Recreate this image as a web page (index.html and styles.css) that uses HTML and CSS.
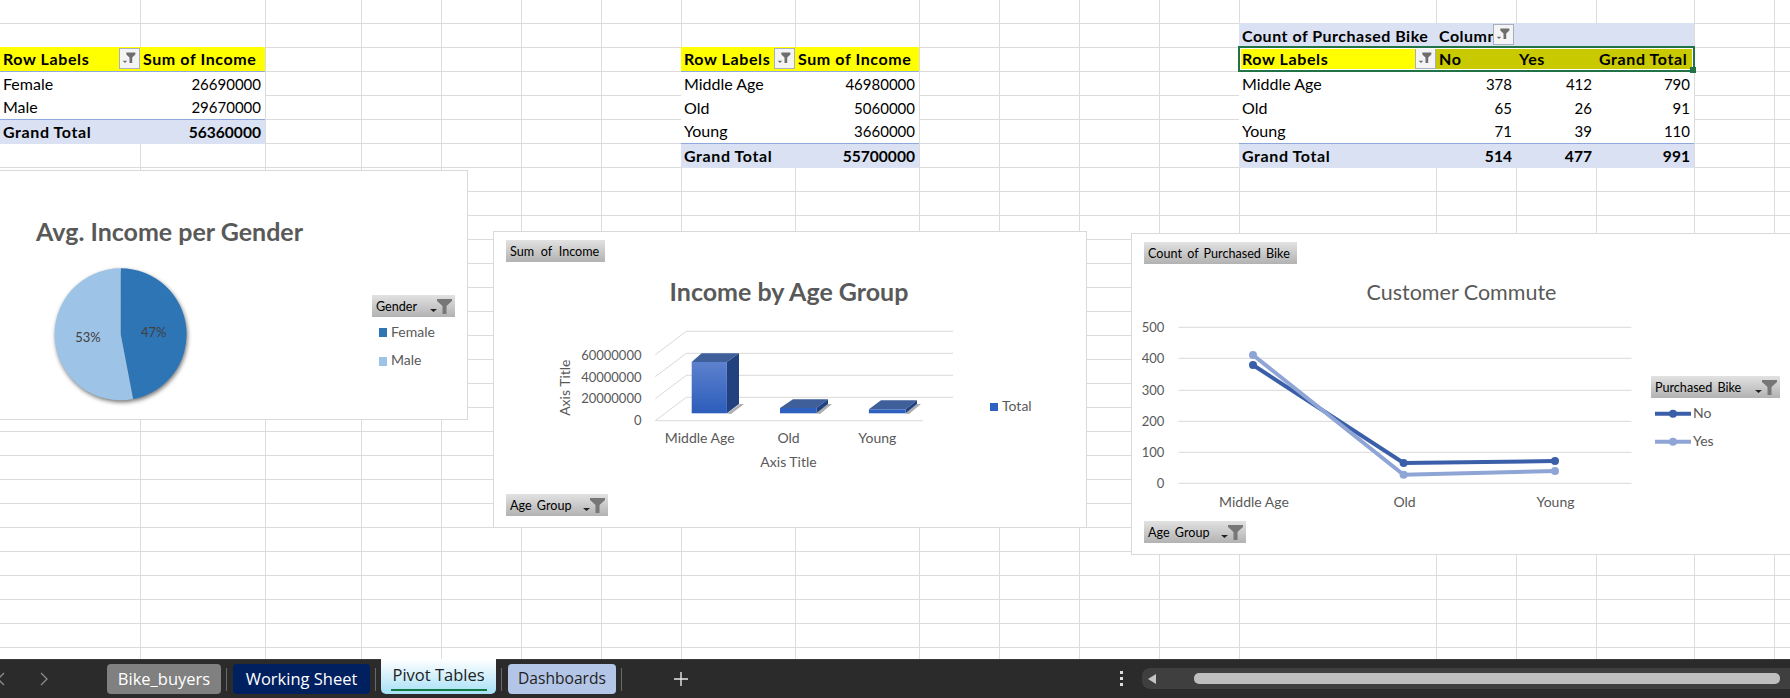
FILE: index.html
```html
<!DOCTYPE html>
<html>
<head>
	<meta charset="utf-8">
	<title>Pivot Tables</title>
	<link rel="stylesheet" href="styles.css">
</head>

<body>

	<svg class="defs" width="0" height="0">
		<symbol id="filter" viewBox="0 0 21 21">
			<path d="M7 4h10v2l-3.5 3.5v6h-3v-6L7 6z" fill="#6e6e6e"/>
			<path d="M3 13h5l-2.5 2.5z" fill="#6e6e6e"/>
		</symbol>
		<symbol id="funnel" viewBox="0 0 22 15">
			<path d="M7 0h15v2l-5.5 5v8h-4V7L7 2z" fill="#777"/>
			<path d="M0 10h7l-3.5 3z" fill="#222"/>
		</symbol>
		<linearGradient id="barFront" x1="0" y1="0" x2="0" y2="1">
			<stop offset="0" stop-color="#5c81cd"/>
			<stop offset="1" stop-color="#2c5dbb"/>
		</linearGradient>
	</svg>

	<div class="window">
		<main class="sheet">

			<table class="pivot pivot-gender">
				<colgroup><col class="w140"><col></colgroup>
				<tr class="head">
					<td class="has-filter">Row Labels <span class="filter-btn"><svg><use href="#filter"/></svg></span></td>
					<td>Sum of Income</td>
				</tr>
				<tr><td>Female</td><td class="num">26690000</td></tr>
				<tr><td>Male</td><td class="num">29670000</td></tr>
				<tr class="total"><td>Grand Total</td><td class="num">56360000</td></tr>
			</table>

			<table class="pivot pivot-age">
				<colgroup><col class="w114"><col></colgroup>
				<tr class="head">
					<td class="has-filter">Row Labels <span class="filter-btn"><svg><use href="#filter"/></svg></span></td>
					<td>Sum of Income</td>
				</tr>
				<tr><td>Middle Age</td><td class="num">46980000</td></tr>
				<tr><td>Old</td><td class="num">5060000</td></tr>
				<tr><td>Young</td><td class="num">3660000</td></tr>
				<tr class="total"><td>Grand Total</td><td class="num">55700000</td></tr>
			</table>

			<table class="pivot pivot-bike">
				<colgroup><col class="w197"><col class="w80"><col class="w80"><col></colgroup>
				<tr class="total caption">
					<td>Count of Purchased Bike</td>
					<td class="has-filter" colspan="3">Column<span class="filter-btn"><svg><use href="#filter"/></svg></span></td>
				</tr>
				<tr class="head selected">
					<td class="has-filter">Row Labels <span class="filter-btn"><svg><use href="#filter"/></svg></span></td>
					<td>No</td>
					<td>Yes</td>
					<td>Grand Total</td>
				</tr>
				<tr><td>Middle Age</td><td class="num">378</td><td class="num">412</td><td class="num">790</td></tr>
				<tr><td>Old</td><td class="num">65</td><td class="num">26</td><td class="num">91</td></tr>
				<tr><td>Young</td><td class="num">71</td><td class="num">39</td><td class="num">110</td></tr>
				<tr class="total"><td>Grand Total</td><td class="num">514</td><td class="num">477</td><td class="num">991</td></tr>
			</table>
			<div class="selection"><span class="handle"></span></div>

			<section class="chart chart-gender">
				<svg class="plot" viewBox="0 171 467 248">
					<text class="title bold" x="36" y="241">Avg. Income per Gender</text>
					<g class="pie">
						<path d="M120.7 334.3V268.3A66 66 0 0 1 133.1 399.1Z" fill="#2e75b6"/>
						<path d="M120.7 334.3L133.1 399.1A66 66 0 1 1 120.7 268.3Z" fill="#9dc3e6"/>
					</g>
					<text class="value dark mid" x="153.7" y="337">47%</text>
					<text class="value dark mid" x="88" y="342">53%</text>
					<rect x="379" y="328" width="8" height="9" fill="#2e75b6"/>
					<text class="label" x="391" y="337">Female</text>
					<rect x="379" y="357" width="8" height="9" fill="#9dc3e6"/>
					<text class="label" x="391" y="365">Male</text>
				</svg>
				<div class="chip chip-gender">Gender <svg class="funnel"><use href="#funnel"/></svg></div>
			</section>

			<section class="chart chart-income">
				<svg class="plot" viewBox="494 233 592 295">
					<text class="title bold mid" x="789" y="302">Income by Age Group</text>
					<g class="gridlines">
						<path d="M655.3 421.7L686.3 398.3H953"/>
						<path d="M655.3 399.7L686.3 376.3H953"/>
						<path d="M655.3 377.7L686.3 354.3H953"/>
						<path d="M655.3 355.7L686.3 332.3H953"/>
						<path d="M655.3 421.7H922.8"/>
					</g>
					<text class="value end" x="641.5" y="361">60000000</text>
					<text class="value end" x="641.5" y="383">40000000</text>
					<text class="value end" x="641.5" y="404">20000000</text>
					<text class="value end" x="641.5" y="426">0</text>
					<text class="label mid" transform="translate(570 388.7) rotate(-90)">Axis Title</text>

					<path class="bar-shadow" d="M727 414.5L740 405L744 405L731 415Z"/>
					<path d="M691.7 363L701.6 354.3H739L726.9 363Z" fill="#3f5f9a"/>
					<path d="M726.9 363L739 354.3V405L726.9 414.3Z" fill="#22417f"/>
					<rect x="691.7" y="363" width="35.2" height="51.3" fill="url(#barFront)"/>

					<path class="bar-shadow" d="M816 414.5L828 405L832 405L820 415Z"/>
					<path d="M780 409L793 400.3H828L816.4 409Z" fill="#3f5f9a"/>
					<path d="M816.4 409L828 400.3V405L816.4 414.3Z" fill="#22417f"/>
					<rect x="780" y="409" width="36.4" height="5.3" fill="#2f62c0"/>

					<path class="bar-shadow" d="M905 414.5L917 405L921 405L909 415Z"/>
					<path d="M868.9 410.3L881 401.3H917L905.6 410.3Z" fill="#3f5f9a"/>
					<path d="M905.6 410.3L917 401.3V405L905.6 414.3Z" fill="#22417f"/>
					<rect x="868.9" y="410.3" width="36.7" height="4" fill="#2f62c0"/>

					<text class="label mid" x="699.7" y="444">Middle Age</text>
					<text class="label mid" x="788.5" y="444">Old</text>
					<text class="label mid" x="877.3" y="444">Young</text>
					<text class="label mid" x="788.5" y="468">Axis Title</text>
					<rect x="990" y="404" width="8" height="8" fill="#2f62c0"/>
					<text class="label" x="1002" y="412">Total</text>
				</svg>
				<div class="chip chip-sum">Sum of Income</div>
				<div class="chip chip-age">Age Group <svg class="funnel"><use href="#funnel"/></svg></div>
			</section>

			<section class="chart chart-commute">
				<svg class="plot" viewBox="1132 234 668 320">
					<text class="title thin mid" x="1461.5" y="300">Customer Commute</text>
					<g class="gridlines">
						<path d="M1178.4 327.3H1631.4"/>
						<path d="M1178.4 358.3H1631.4"/>
						<path d="M1178.4 390.3H1631.4"/>
						<path d="M1178.4 421.3H1631.4"/>
						<path d="M1178.4 452.3H1631.4"/>
						<path d="M1178.4 483.3H1631.4"/>
					</g>
					<text class="value end" x="1164.4" y="332">500</text>
					<text class="value end" x="1164.4" y="363">400</text>
					<text class="value end" x="1164.4" y="395">300</text>
					<text class="value end" x="1164.4" y="426">200</text>
					<text class="value end" x="1164.4" y="457">100</text>
					<text class="value end" x="1164.4" y="488">0</text>

					<g class="series series-no">
						<path d="M1253 365L1403.6 463L1555 461"/>
						<circle cx="1253" cy="365" r="4"/><circle cx="1403.6" cy="463" r="4"/><circle cx="1555" cy="461" r="4"/>
					</g>
					<g class="series series-yes">
						<path d="M1253 355L1403.6 474.7L1555 471"/>
						<circle cx="1253" cy="355" r="4"/><circle cx="1403.6" cy="474.7" r="4"/><circle cx="1555" cy="471" r="4"/>
					</g>

					<text class="label mid" x="1254" y="507">Middle Age</text>
					<text class="label mid" x="1404.6" y="507">Old</text>
					<text class="label mid" x="1555.5" y="507">Young</text>

					<g class="series series-no">
						<path d="M1655 413.7H1691"/><circle cx="1673" cy="413.7" r="4"/>
					</g>
					<text class="label" x="1693" y="418">No</text>
					<g class="series series-yes">
						<path d="M1655 441.7H1691"/><circle cx="1673" cy="441.7" r="4"/>
					</g>
					<text class="label" x="1693" y="446">Yes</text>
				</svg>
				<div class="chip chip-count">Count of Purchased Bike</div>
				<div class="chip chip-age2">Age Group <svg class="funnel"><use href="#funnel"/></svg></div>
				<div class="chip chip-bike">Purchased Bike <svg class="funnel"><use href="#funnel"/></svg></div>
			</section>

		</main>

		<footer class="tabbar">
			<nav class="sheet-nav">
				<svg class="chevron" viewBox="0 0 8 14"><path d="M7 1L1 7l6 6"/></svg>
				<svg class="chevron" viewBox="0 0 8 14"><path d="M1 1l6 6-6 6"/></svg>
			</nav>
			<div class="tab tab-bike">Bike_buyers</div>
			<span class="sep"></span>
			<div class="tab tab-working">Working Sheet</div>
			<span class="sep"></span>
			<div class="tab tab-pivot"><span class="tab-label">Pivot Tables</span></div>
			<span class="sep"></span>
			<div class="tab tab-dash">Dashboards</div>
			<span class="sep"></span>
			<svg class="add" viewBox="0 0 14 14"><path d="M7 0v14M0 7h14"/></svg>
			<div class="dots"><i></i><i></i><i></i></div>
			<div class="scroll">
				<span class="scroll-left"></span>
				<span class="thumb"></span>
			</div>
		</footer>
	</div>

</body>
</html>
```

FILE: styles.css
```css
html, body {
	margin: 0;
	padding: 0;
	height: 100%;
	overflow: hidden;
	background: #fff;
}
body {
	font-family: Lato, "Liberation Sans", sans-serif;
	color: #000;
}
.defs {
	position: absolute;
}
.window {
	display: flex;
	flex-direction: column;
	height: 698px;
}

/* sheet: tracks follow the excel column widths, lines are painted behind */
.sheet {
	--line: #dcdcdc;
	position: relative;
	flex: 1;
	overflow: hidden;
	display: grid;
	grid-template-columns: 140px 125px 96px 80px 80px 80px 80px 114px 124px 80px 80px 80px 80px 197px 80px 80px 98px 80px 16px;
	grid-template-rows: 23px repeat(26, 24px);
	background-color: #fff;
	background-image:
		linear-gradient(var(--line), var(--line)), linear-gradient(var(--line), var(--line)),
		linear-gradient(var(--line), var(--line)), linear-gradient(var(--line), var(--line)),
		linear-gradient(var(--line), var(--line)), linear-gradient(var(--line), var(--line)),
		linear-gradient(var(--line), var(--line)), linear-gradient(var(--line), var(--line)),
		linear-gradient(var(--line), var(--line)), linear-gradient(var(--line), var(--line)),
		linear-gradient(var(--line), var(--line)), linear-gradient(var(--line), var(--line)),
		linear-gradient(var(--line), var(--line)), linear-gradient(var(--line), var(--line)),
		linear-gradient(var(--line), var(--line)), linear-gradient(var(--line), var(--line)),
		linear-gradient(var(--line), var(--line)), linear-gradient(var(--line), var(--line)),
		linear-gradient(var(--line) 1px, transparent 1px);
	background-repeat: no-repeat, no-repeat, no-repeat, no-repeat, no-repeat, no-repeat, no-repeat, no-repeat, no-repeat, no-repeat, no-repeat, no-repeat, no-repeat, no-repeat, no-repeat, no-repeat, no-repeat, no-repeat, repeat;
	background-size: 1px 100%, 1px 100%, 1px 100%, 1px 100%, 1px 100%, 1px 100%, 1px 100%, 1px 100%, 1px 100%, 1px 100%, 1px 100%, 1px 100%, 1px 100%, 1px 100%, 1px 100%, 1px 100%, 1px 100%, 1px 100%, 100% 24px;
	background-position: 140px 0, 265px 0, 361px 0, 441px 0, 521px 0, 601px 0, 681px 0, 795px 0, 919px 0, 999px 0, 1079px 0, 1159px 0, 1239px 0, 1436px 0, 1516px 0, 1596px 0, 1694px 0, 1774px 0, 0 23px;
}

/* pivot tables */
.pivot {
	align-self: start;
	width: 100%;
	table-layout: fixed;
	border-collapse: collapse;
	background: #fff;
	font-size: 16px;
	line-height: 20px;
}
.pivot-gender {
	grid-column: 1 / 3;
	grid-row: 3 / 7;
}
.pivot-age {
	grid-column: 8 / 10;
	grid-row: 3 / 8;
}
.pivot-bike {
	grid-column: 14 / 18;
	grid-row: 2 / 8;
}
.w114 { width: 114px; }
.w140 { width: 140px; }
.w197 { width: 197px; }
.w80 { width: 80px; }
.pivot td {
	height: 24px;
	padding: 1px 4px 0 3px;
	box-sizing: border-box;
	white-space: nowrap;
	overflow: hidden;
}
.pivot .num {
	text-align: right;
	font-size: 15px;
}
.head td {
	background: #ff0;
	font-weight: 700;
	letter-spacing: .6px;
	border-bottom: 1px solid #8ea9db;
}
.head.selected td + td {
	background: #c9c900;
}
.total td {
	background: #d9e1f2;
	font-weight: 700;
	letter-spacing: .6px;
	border-top: 1px solid #8ea9db;
	height: 25px;
}
.total .num {
	letter-spacing: 0;
	font-size: 15.6px;
}
.caption td {
	border-top: 0;
	height: 24px;
	letter-spacing: .5px;
}
.pivot .has-filter {
	position: relative;
}
.filter-btn {
	position: absolute;
	right: 0;
	top: 1px;
	width: 21px;
	height: 21px;
	box-sizing: border-box;
	border: 1px solid #a7afbd;
	background: #f4f4f4;
}
.caption .filter-btn {
	right: auto;
	left: 57px;
}
.filter-btn svg {
	display: block;
	width: 19px;
	height: 19px;
}
.selection {
	grid-column: 14 / 18;
	grid-row: 3 / 4;
	position: relative;
	margin: -1px;
	border: 2px solid #217346;
	box-shadow: inset 0 0 0 1px #fff;
	box-sizing: border-box;
}
.handle {
	position: absolute;
	right: -3px;
	bottom: -3px;
	width: 6px;
	height: 6px;
	background: #217346;
}

/* charts float over the cells */
.chart {
	position: absolute;
	box-sizing: border-box;
	border: 1px solid #d9d9d9;
	background: #fff;
}
.chart-gender {
	left: -1px;
	top: 170px;
	width: 469px;
	height: 250px;
}
.chart-income {
	left: 493px;
	top: 231px;
	width: 594px;
	height: 297px;
}
.chart-commute {
	left: 1131px;
	top: 233px;
	width: 670px;
	height: 322px;
}
.plot {
	display: block;
	width: 100%;
	height: 100%;
}
.plot text {
	font-family: Lato, "Liberation Sans", sans-serif;
}
.title {
	font-size: 25px;
	fill: #595959;
}
.title.thin {
	font-size: 21.5px;
}
.bold {
	font-weight: 700;
}
.label {
	font-size: 14px;
	fill: #595959;
}
.value {
	font-size: 13px;
	fill: #595959;
}
.dark {
	fill: #404040;
}
.mid {
	text-anchor: middle;
}
.end {
	text-anchor: end;
}
.pie {
	filter: drop-shadow(1px 2px 2px rgba(0, 0, 0, .55));
}
.gridlines path {
	fill: none;
	stroke: #d9d9d9;
	stroke-width: 1;
}
.bar-shadow {
	fill: #777;
	opacity: .6;
}
.series path {
	fill: none;
	stroke-width: 4;
}
.series-no path {
	stroke: #3a5fa8;
}
.series-no circle {
	fill: #3a5fa8;
}
.series-yes path {
	stroke: #8fa5d6;
}
.series-yes circle {
	fill: #8fa5d6;
}

.chip {
	position: absolute;
	display: flex;
	align-items: center;
	justify-content: space-between;
	box-sizing: border-box;
	height: 22px;
	padding: 0 3px 0 4px;
	background: linear-gradient(#e2e2e2, #b2b2b2);
	font-size: 12.6px;
	word-spacing: 2px;
	white-space: nowrap;
}
.funnel {
	width: 22px;
	height: 15px;
}
.chip-gender { left: 372px; top: 124px; width: 83px; }
.chip-sum { left: 12px; top: 8px; width: 99px; word-spacing: 3.5px; }
.chip-age { left: 12px; top: 262px; width: 102px; }
.chip-count { left: 12px; top: 8px; width: 153px; }
.chip-age2 { left: 12px; top: 287px; width: 102px; }
.chip-bike { left: 519px; top: 142px; width: 129px; }

/* bottom tab strip */
.tabbar {
	display: flex;
	align-items: flex-end;
	height: 39px;
	background: #2b2b2b;
	box-shadow: inset 0 1px 0 #3a3a3a;
	font-family: "Open Sans", "Liberation Sans", sans-serif;
	font-size: 16.5px;
}
.sheet-nav {
	display: flex;
	gap: 35px;
	align-items: center;
	align-self: center;
	width: 110px;
	margin-left: -3px;
}
.chevron {
	width: 8px;
	height: 14px;
	fill: none;
	stroke: #8c8c8c;
	stroke-width: 1.3;
}
.tab {
	display: flex;
	align-items: center;
	justify-content: center;
	box-sizing: border-box;
	height: 30px;
	margin-bottom: 4px;
	padding-bottom: 2px;
	border-radius: 4px;
	white-space: nowrap;
}
.tab-bike {
	width: 114px;
	background: #808080;
	color: #fff;
}
.tab-working {
	width: 137px;
	background: #002060;
	color: #fff;
}
.tab-pivot {
	width: 115px;
	height: 35px;
	margin-left: -1px;
	padding-bottom: 0;
	align-items: flex-start;
	border-radius: 0 0 5px 5px;
	background: linear-gradient(#fff, #a6e0f7);
	color: #222;
}
.tab-label {
	padding-top: 4px;
	height: 26px;
	width: 96px;
	text-align: center;
	border-bottom: 2px solid #107c41;
}
.tab-dash {
	width: 108px;
	background: #b4c6e7;
	color: #222;
	font-size: 15.6px;
}
.sep {
	align-self: center;
	width: 1px;
	height: 23px;
	margin: 2px 6px 0 5px;
	background: #6a6a6a;
}
.add {
	align-self: center;
	width: 14px;
	height: 14px;
	margin-left: 46px;
	stroke: #e8e8e8;
	stroke-width: 1.4;
}
.dots {
	align-self: center;
	display: flex;
	flex-direction: column;
	gap: 3px;
	margin-left: auto;
	margin-right: 19px;
}
.dots i {
	display: block;
	width: 3px;
	height: 3px;
	background: #ddd;
}
.scroll {
	align-self: center;
	display: flex;
	align-items: center;
	width: 648px;
	height: 21px;
	border-radius: 8px 0 0 8px;
	background: #3f3f3f;
}
.scroll-left {
	width: 0;
	height: 0;
	margin-left: 6px;
	border-style: solid;
	border-width: 5.5px 8px 5.5px 0;
	border-color: transparent #c4c4c4 transparent transparent;
}
.thumb {
	width: 586px;
	height: 11px;
	margin-left: 38px;
	border-radius: 5px;
	background: #bebebe;
}
```
